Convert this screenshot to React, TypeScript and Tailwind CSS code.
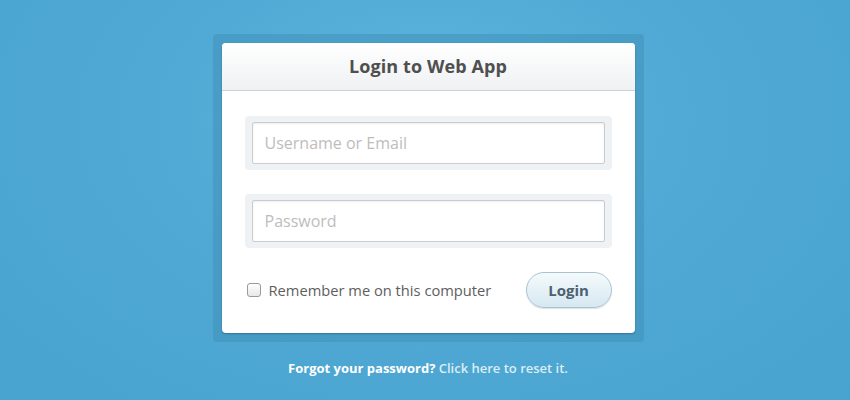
export default function App() {
  return (
    <div
      className="w-[850px] h-[400px] overflow-hidden flex flex-col items-center pt-[34px] pl-[6px] bg-[radial-gradient(ellipse_at_50%_30%,#5cb6dd_0%,#4fa9d4_45%,#49a3cf_100%)]"
      style={{ fontFamily: '"Open Sans", "Liberation Sans", sans-serif' }}
    >
      <div className="p-[9px] rounded-[4px] bg-[#3f8fb8]/50">
        <div className="w-[413px] bg-white rounded-[4px] shadow-[0_1px_2px_rgba(0,0,0,0.25)] overflow-hidden">
          <div className="h-[48px] flex items-center justify-center bg-gradient-to-b from-white to-[#eff1f3] border-b border-[#cfd3d7]">
            <h1 className="text-[18px] font-bold text-[#4f4f4f] tracking-[0.1px]">Login to Web App</h1>
          </div>
          <div className="px-[23px] pt-[25px] pb-[25px] flex flex-col gap-[24px]">
            <div className="bg-[#eef2f5] rounded-[4px] py-[6px] px-[7px]">
              <input
                type="text"
                placeholder="Username or Email"
                className="w-full h-[42px] px-[12px] border border-[#c9cdd1] rounded-[2px] bg-white text-[16px] text-[#555] placeholder:text-[#bdbdbd] shadow-[inset_0_1px_2px_rgba(0,0,0,0.08)] outline-none"
              />
            </div>
            <div className="bg-[#eef2f5] rounded-[4px] py-[6px] px-[7px]">
              <input
                type="password"
                placeholder="Password"
                className="w-full h-[42px] px-[12px] border border-[#c9cdd1] rounded-[2px] bg-white text-[16px] text-[#555] placeholder:text-[#bdbdbd] shadow-[inset_0_1px_2px_rgba(0,0,0,0.08)] outline-none"
              />
            </div>
            <div className="flex items-center justify-between">
              <label className="flex items-center gap-[8px] pl-[2px] text-[14.7px] text-[#5e5e5e]">
                <span className="w-[14px] h-[14px] rounded-[3px] border border-[#9a9a9a] bg-gradient-to-b from-white to-[#e8e8e8]" />
                Remember me on this computer
              </label>
              <button className="w-[86px] h-[36px] rounded-full border border-[#a9c3d1] bg-gradient-to-b from-[#f5fafc] to-[#d6e8f1] text-[15px] font-bold text-[#4c6270] shadow-[0_1px_1px_rgba(0,0,0,0.12)]">
                Login
              </button>
            </div>
          </div>
        </div>
      </div>
      <p className="mt-[17px] text-[13px] font-semibold text-[#dcedf6]">
        <span className="text-white font-bold">Forgot your password?</span> Click here to reset it.
      </p>
    </div>
  );
}
